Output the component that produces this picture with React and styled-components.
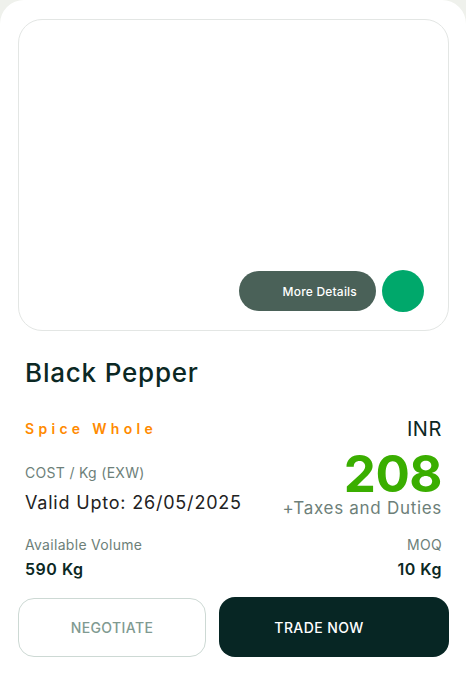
import React from "react";
import styled, { createGlobalStyle } from "styled-components";

const Global = createGlobalStyle`
  html, body { margin: 0; padding: 0; background: #eff1ec; }
  body { font-family: Inter, "Noto Sans", sans-serif; }
  * { box-sizing: border-box; }
`;

const Card = styled.div`
  width: 466px;
  min-height: 700px;
  background: #ffffff;
  border-radius: 24px;
  padding: 19px 17px 0 18px;
`;

const ImageBox = styled.div`
  height: 312px;
  border: 1px solid #e3e6e4;
  border-radius: 24px;
  display: flex;
  align-items: flex-end;
  justify-content: flex-end;
  gap: 6px;
  padding: 0 24px 18px 0;
`;

const DetailsPill = styled.button`
  width: 137px;
  height: 40px;
  border: none;
  border-radius: 20px;
  background: #4a6158;
  color: #ffffff;
  font-family: inherit;
  font-size: 12px;
  font-weight: 500;
  letter-spacing: 0.2px;
  display: flex;
  align-items: center;
  justify-content: flex-end;
  padding: 0 19px 0 0;
  margin-bottom: 1px;
`;

const Dot = styled.div`
  width: 42px;
  height: 42px;
  border-radius: 50%;
  background: #00a86b;
`;

const Info = styled.div`
  padding: 0 7px;
`;

const Title = styled.h1`
  margin: 25px 0 0;
  font-size: 26px;
  font-weight: 500;
  letter-spacing: 0.8px;
  color: #0b2824;
  line-height: 34px;
`;

const Row = styled.div`
  display: flex;
  justify-content: space-between;
  align-items: ${(p) => p.$align || "flex-start"};
  margin-top: ${(p) => p.$gap || 0}px;
`;

const Col = styled.div`
  display: flex;
  flex-direction: column;
  align-items: ${(p) => (p.$right ? "flex-end" : "flex-start")};
`;

const Category = styled.div`
  color: #ff8a00;
  font-size: 14px;
  font-weight: 600;
  letter-spacing: 4.3px;
  line-height: 18px;
`;

const Currency = styled.div`
  color: #0b2824;
  font-size: 20px;
  letter-spacing: 0.6px;
  line-height: 24px;
`;

const Label = styled.div`
  color: #6d7f79;
  font-size: 14px;
  letter-spacing: 0.3px;
  line-height: 18px;
  margin-top: ${(p) => p.$top || 0}px;
`;

const Valid = styled.div`
  color: #222;
  font-size: 18px;
  letter-spacing: 0.8px;
  line-height: 22px;
  margin-top: 10px;
`;

const Price = styled.div`
  color: #3aae00;
  font-size: 51px;
  font-weight: 700;
  line-height: 50px;
  letter-spacing: -0.5px;
`;

const Taxes = styled.div`
  color: #6d7f79;
  font-size: 17px;
  letter-spacing: 0.7px;
  line-height: 18px;
`;

const Value = styled.div`
  color: #0b2824;
  font-size: 16px;
  font-weight: 600;
  letter-spacing: 0.5px;
  line-height: 20px;
  margin-top: 5px;
`;

const Actions = styled.div`
  display: grid;
  grid-template-columns: 188px 230px;
  gap: 13px;
  margin-top: 18px;
  align-items: center;
`;

const ActionButton = styled.button`
  height: ${(p) => (p.$primary ? "60px" : "59px")};
  border-radius: 16px;
  border: ${(p) => (p.$primary ? "none" : "1px solid #cdd9d4")};
  background: ${(p) => (p.$primary ? "#072624" : "#ffffff")};
  color: ${(p) => (p.$primary ? "#ffffff" : "#809a91")};
  font-family: inherit;
  font-size: 14px;
  font-weight: 500;
  letter-spacing: 0.4px;
  text-transform: uppercase;
  display: flex;
  align-items: center;
  justify-content: center;
  padding: ${(p) => (p.$primary ? "0 30px 0 0" : "0")};
`;

export default function App() {
  return (
    <>
      <Global />
      <Card>
        <ImageBox>
          <DetailsPill>More Details</DetailsPill>
          <Dot />
        </ImageBox>
        <Info>
          <Title>Black Pepper</Title>
          <Row $align="center" $gap={27}>
            <Category>Spice Whole</Category>
            <Currency>INR</Currency>
          </Row>
          <Row $gap={8}>
            <Col>
              <Label $top={15}>COST / Kg (EXW)</Label>
              <Valid>Valid Upto: 26/05/2025</Valid>
            </Col>
            <Col $right>
              <Price>208</Price>
              <Taxes>+Taxes and Duties</Taxes>
            </Col>
          </Row>
          <Row $gap={19}>
            <Col>
              <Label>Available Volume</Label>
              <Value>590 Kg</Value>
            </Col>
            <Col $right>
              <Label>MOQ</Label>
              <Value>10 Kg</Value>
            </Col>
          </Row>
        </Info>
        <Actions>
          <ActionButton>Negotiate</ActionButton>
          <ActionButton $primary>Trade Now</ActionButton>
        </Actions>
      </Card>
    </>
  );
}
